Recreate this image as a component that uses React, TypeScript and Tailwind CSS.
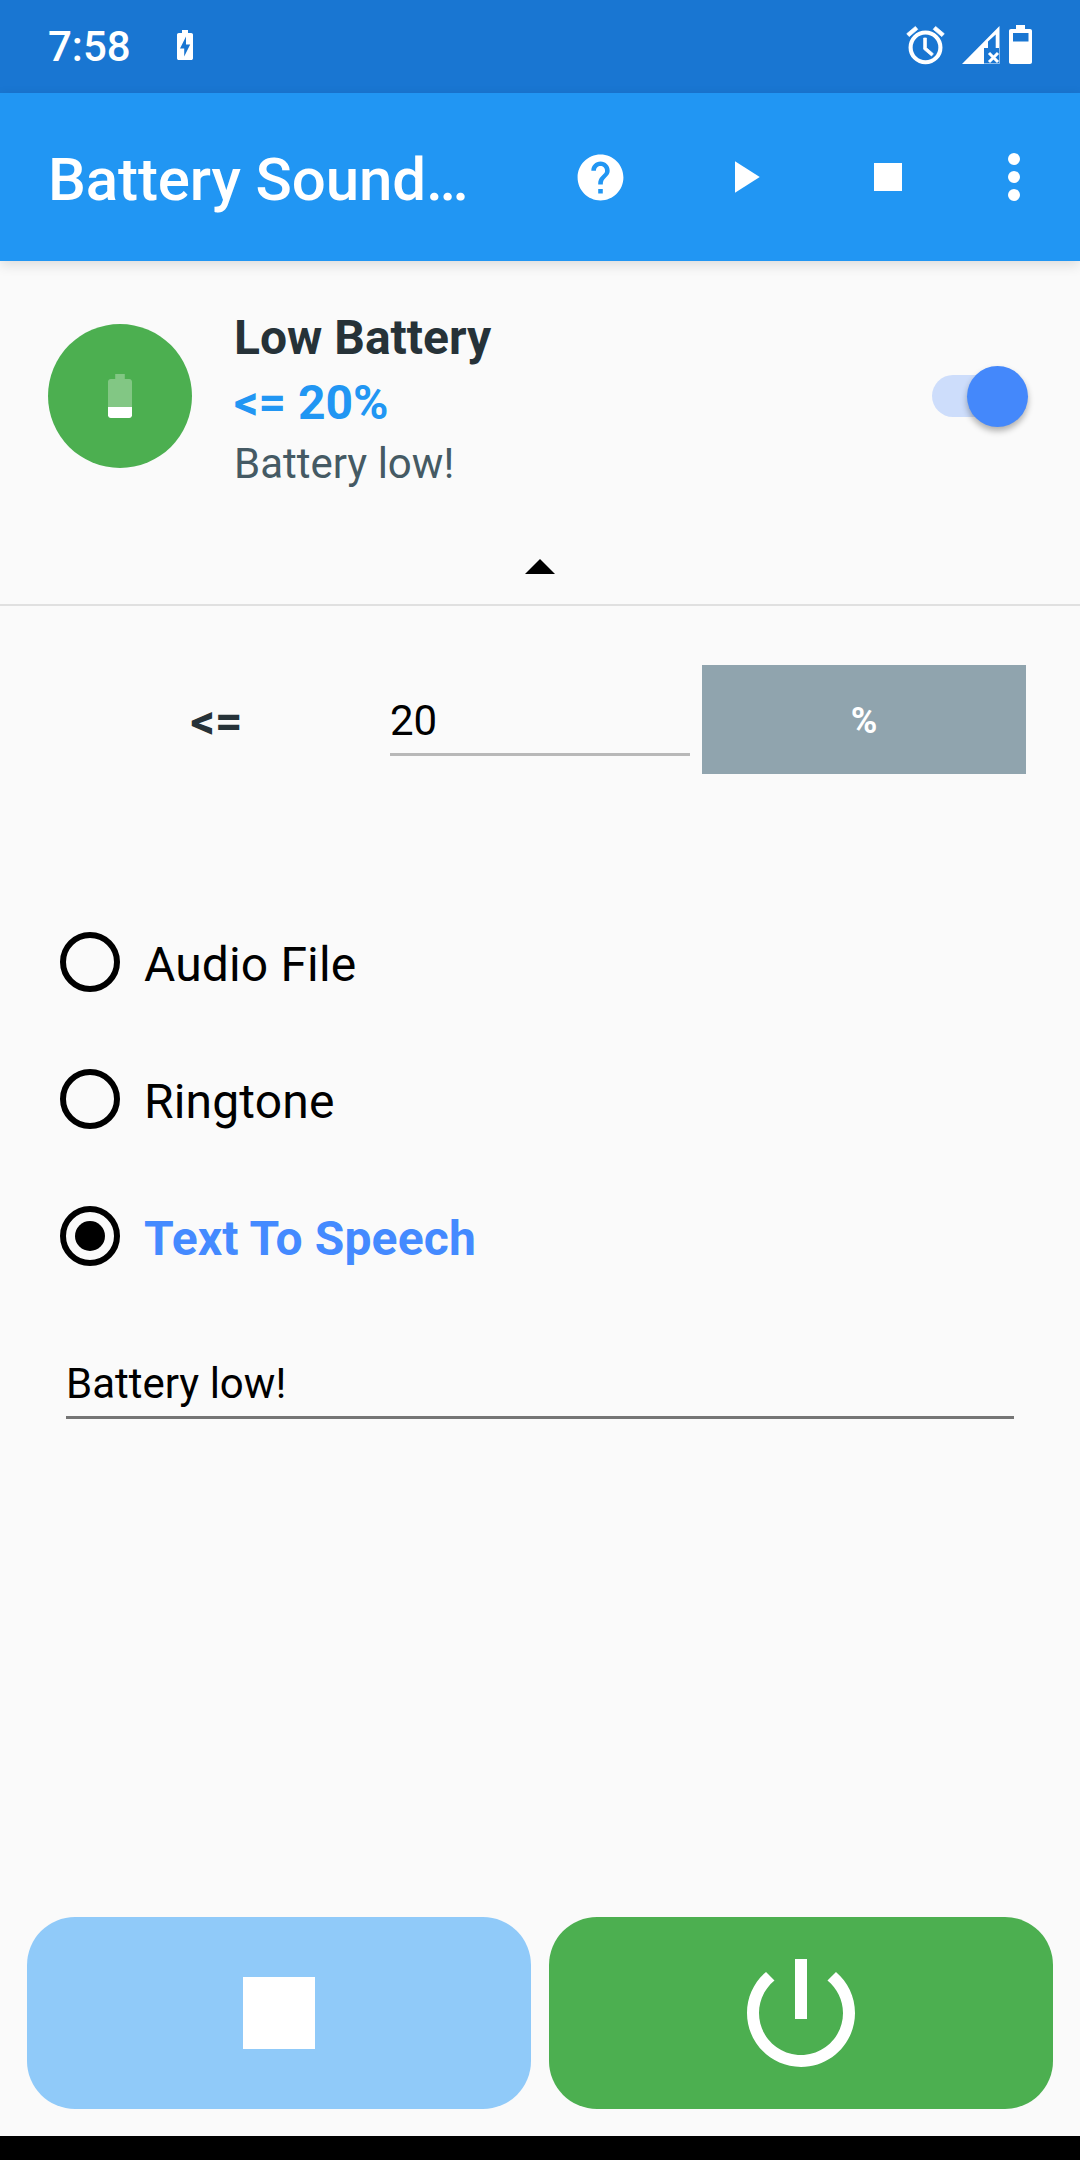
import { useState } from "react";

// --- ICONS ---

const HelpIcon = () => (
  <svg viewBox="0 0 24 24" className="size-[55px]" fill="currentColor">
    <path d="M12 2C6.48 2 2 6.48 2 12s4.48 10 10 10 10-4.48 10-10S17.52 2 12 2zm1 17h-2v-2h2v2zm2.07-7.75l-.9.92C13.45 12.9 13 13.5 13 15h-2v-.5c0-1.1.45-2.1 1.17-2.83l1.24-1.26c.37-.36.59-.86.59-1.41 0-1.1-.9-2-2-2s-2 .9-2 2H8c0-2.21 1.79-4 4-4s4 1.79 4 4c0 .88-.36 1.68-.93 2.25z" />
  </svg>
);

const PlayIcon = () => (
  <svg viewBox="0 0 24 24" className="size-[54px]" fill="currentColor">
    <path d="M8 5v14l11-7z" />
  </svg>
);

const MoreIcon = () => (
  <svg viewBox="0 0 24 24" className="size-[72px]" fill="currentColor">
    <circle cx="12" cy="6" r="2" />
    <circle cx="12" cy="12" r="2" />
    <circle cx="12" cy="18" r="2" />
  </svg>
);

const ChargingIcon = () => (
  <svg viewBox="0 0 16 30" className="h-[30px] w-4" fill="currentColor">
    <path
      fillRule="evenodd"
      d="M5 0h6v3h3.2c1 0 1.8.8 1.8 1.8v23.4c0 1-.8 1.8-1.8 1.8H1.8C.8 30 0 29.2 0 28.2V4.8C0 3.8.8 3 1.8 3H5zM9 6.5L3 18.500h4.200v8l6-12H9z"
    />
  </svg>
);

const AlarmIcon = () => (
  <svg viewBox="0 0 24 24" className="size-[45px]" fill="currentColor">
    <g stroke="currentColor" strokeWidth="0.4">
      <path d="M22 5.720l-4.600-3.860-1.290 1.530 4.600 3.860L22 5.720z" />
      <path d="M7.880 3.390L6.600 1.860 2 5.710l1.290 1.530 4.590-3.850z" />
      <path d="M12.500 8H11v6l4.200 3.600 1-1.200-3.700-3.200V8z" />
    </g>
    <circle cx="12" cy="13" r="7.950" fill="none" stroke="currentColor" strokeWidth="2.200" />
  </svg>
);

const SignalIcon = () => (
  <svg viewBox="0 0 38 38" className="size-[38px]" fill="currentColor">
    <path d="M37.500 0v22h-3.800V8.500L26 15.500V22h-4v16H0z" />
    <path d="M22 37.500h15.500V22" fill="none" stroke="currentColor" strokeOpacity="0.5" />
    <path d="M27 27l9 9M36 27l-9 9" stroke="currentColor" strokeWidth="3" />
  </svg>
);

const PhoneBatteryIcon = () => (
  <svg viewBox="0 0 23 39" className="h-[39px] w-[23px]" fill="currentColor">
    <path
      fillRule="evenodd"
      d="M7 0h9v4h5c1.200 0 2 .8 2 2v31c0 1.200-.8 2-2 2H2c-1.200 0-2-.8-2-2V6c0-1.200.8-2 2-2h5zM4 8v8.500h15.500V8z"
    />
  </svg>
);

const LowBatteryIcon = () => (
  <svg viewBox="0 0 24 44" className="h-11 w-6" fill="#fff">
    <path
      fillOpacity="0.3"
      d="M7.200 0h9.600v5h4.400C22.700 5 24 6.300 24 7.800V33H0V7.800C0 6.300 1.300 5 2.800 5h4.400z"
    />
    <path d="M0 33h24v8.200c0 1.500-1.300 2.800-2.800 2.800H2.800C1.300 44 0 42.700 0 41.200z" />
  </svg>
);

const PowerIcon = () => (
  <svg viewBox="0 0 24 24" className="size-36" fill="currentColor">
    <path d="M13 3h-2v10h2V3zm4.830 2.170l-1.420 1.420C17.990 7.860 19 9.810 19 12c0 3.870-3.130 7-7 7s-7-3.130-7-7c0-2.190 1.010-4.140 2.580-5.420L6.170 5.170C4.230 6.820 3 9.260 3 12c0 4.970 4.030 9 9 9s9-4.030 9-9c0-2.740-1.230-5.180-3.170-6.830z" />
  </svg>
);

// --- SECTIONS ---

function StatusBar() {
  return (
    <div className="flex h-[93px] items-start bg-[#1976d2] pl-12 text-white">
      <span className="mt-[22px] w-[129px] text-[42px] leading-[50px] font-medium">7:58</span>
      <div className="mt-[30px]">
        <ChargingIcon />
      </div>
      <div className="mt-[23px] ml-auto">
        <AlarmIcon />
      </div>
      <div className="mt-[26px] ml-[14px]">
        <SignalIcon />
      </div>
      <div className="mt-[25px] mr-12 ml-[9px]">
        <PhoneBatteryIcon />
      </div>
    </div>
  );
}

function AppBar() {
  return (
    <header className="z-10 flex h-[168px] items-center bg-[#2196f3] pl-12 text-white shadow-[0_4px_12px_rgba(0,0,0,0.12)]">
      <h1 className="mt-[5px] w-[480px] text-[60px] leading-[70px] font-medium tracking-[-0.1px] whitespace-nowrap">
        Battery Sound…
      </h1>
      <div className="flex items-center">
        <button className="flex w-36 justify-center" aria-label="Help">
          <HelpIcon />
        </button>
        <button className="flex w-36 justify-center" aria-label="Play">
          <PlayIcon />
        </button>
        <button className="flex w-36 justify-center" aria-label="Stop">
          <span className="size-7 bg-white" />
        </button>
        <button className="ml-[18px]" aria-label="More">
          <MoreIcon />
        </button>
      </div>
    </header>
  );
}

function AlertSummary() {
  return (
    <section className="flex h-[345px] flex-col border-b-2 border-[#e0e0e0]">
      <div className="flex pt-[52px] pl-12">
        <div className="mt-[11px] flex size-36 items-center justify-center rounded-full bg-[#4caf50]">
          <LowBatteryIcon />
        </div>
        <div className="ml-[42px]">
          <p className="h-[65px] text-[48px] leading-[50px] font-bold text-[#263238]">Low Battery</p>
          <p className="h-[61px] text-[48px] leading-[50px] font-bold text-[#2196f3]">&lt;= 20%</p>
          <p className="text-[42px] leading-[50px] text-[#455a64]">Battery low!</p>
        </div>
        <div className="mt-[53px] mr-[52px] ml-auto flex h-[60px] w-24 items-center">
          <div className="flex h-[42px] w-[90px] items-center rounded-full bg-[#cdddfb]">
            <div className="ml-[35px] size-[61px] shrink-0 rounded-full bg-[#4488fb] shadow-[0_4px_6px_rgba(0,0,0,0.3)]" />
          </div>
        </div>
      </div>
      <svg viewBox="0 0 30 15" className="mx-auto mt-auto mb-[30px] h-[15px] w-[30px]">
        <path d="M0 15L15 0l15 15z" />
      </svg>
    </section>
  );
}

const SOUND_TYPES = ["Audio File", "Ringtone", "Text To Speech"];

function SoundTypePicker() {
  const [selected, setSelected] = useState("Text To Speech");

  return (
    <div className="mt-[119px] flex flex-col pl-[60px]">
      {SOUND_TYPES.map((type) => (
        <div key={type} className="flex h-[137px] items-center" onClick={() => setSelected(type)}>
          <div className="flex size-[60px] items-center justify-center rounded-full border-[6px] border-black">
            {selected === type && <div className="size-[30px] rounded-full bg-black" />}
          </div>
          <span
            className={`mt-[7px] ml-6 text-[48px] leading-[56px] tracking-[0.15px] ${
              selected === type ? "font-bold text-[#448aff]" : "text-black"
            }`}
          >
            {type}
          </span>
        </div>
      ))}
    </div>
  );
}

export default function App() {
  return (
    <div className="flex h-[2160px] w-[1080px] flex-col overflow-hidden bg-[#fafafa] font-[Roboto,sans-serif]">
      <StatusBar />
      <AppBar />
      <AlertSummary />
      <div className="mt-[59px] flex h-[109px] pr-[54px]">
        <div className="flex w-[390px] justify-center pt-[32px] pl-[43px] text-[48px] leading-[50px] font-bold text-[#263238]">
          &lt;=
        </div>
        <div className="h-[91px] w-[300px] border-b-[3px] border-[#b8b8b8] pt-[31px] text-[42px] leading-[50px] text-black">
          20
        </div>
        <button className="ml-3 flex-1 bg-[#90a4ae] pt-[3px] text-[36px] font-bold text-white">%</button>
      </div>
      <SoundTypePicker />
      <div className="mx-[66px] mt-[55px] h-[60px] border-b-[3px] border-[#757575] text-[42px] leading-[50px] text-black">
        Battery low!
      </div>
      <div className="mx-[27px] mt-auto mb-[27px] flex h-48 shrink-0 gap-[18px] text-white">
        <button className="flex flex-1 items-center justify-center rounded-[48px] bg-[#90caf9]" aria-label="Stop sound">
          <span className="size-[72px] bg-white" />
        </button>
        <button className="flex flex-1 items-center justify-center rounded-[48px] bg-[#4caf50]" aria-label="Power">
          <PowerIcon />
        </button>
      </div>
      <div className="h-6 shrink-0 bg-black" />
    </div>
  );
}
